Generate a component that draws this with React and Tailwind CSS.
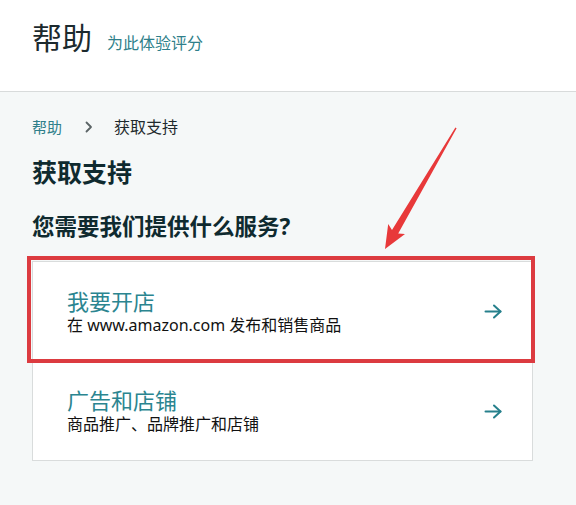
import React from "react";

function ArrowRight() {
  return (
    <svg width="18" height="17" viewBox="0 0 18 17" fill="none" stroke="#26808c" strokeWidth="2" strokeLinecap="round" strokeLinejoin="round">
      <path d="M1.5 8.5h15" />
      <path d="M10 2.5l6.5 6-6.5 6" />
    </svg>
  );
}

function Card({ title, sub, first }) {
  return (
    <div className={`h-[99px] flex items-center justify-between pl-[34px] pr-[30px] bg-white ${first ? "" : "border-t border-[#d9dcdc]"}`}>
      <div className="flex flex-col">
        <div className="text-[22px] leading-[26px] text-[#2b8590]">{title}</div>
        <div className="text-[16px] leading-[22px] text-[#111111]">{sub}</div>
      </div>
      <ArrowRight />
    </div>
  );
}

export default function App() {
  return (
    <div
      className="relative min-h-screen bg-[#f5f8f8] overflow-hidden"
      style={{ fontFamily: '"Noto Sans", "Noto Sans CJK SC", sans-serif' }}
    >
      <header className="h-[92px] bg-white border-b border-[#d8dbdb] px-8 pt-[19px]">
        <div className="flex items-baseline gap-[15px]">
          <span className="text-[30px] leading-[38px] text-[#1c2a2e]">帮助</span>
          <span className="text-[16px] leading-[22px] text-[#2f7f8a]">为此体验评分</span>
        </div>
      </header>

      <main className="px-8 pt-[25px]">
        <nav className="flex items-center h-[20px] text-[15px] leading-[20px]">
          <span className="text-[#2f7f8a]">帮助</span>
          <svg className="ml-[23px] mr-[21px]" width="8" height="12" viewBox="0 0 8 12" fill="none" stroke="#5b6466" strokeWidth="1.8" strokeLinecap="round" strokeLinejoin="round">
            <path d="M1.5 1.5l4.5 4.5-4.5 4.5" />
          </svg>
          <span className="text-[16px] text-[#1f2a2d]">获取支持</span>
        </nav>

        <h1 className="mt-[19px] text-[25px] leading-[32px] font-bold text-[#0f2a2f]">获取支持</h1>
        <h2 className="mt-[24px] text-[22.5px] leading-[30px] font-bold text-[#0f2a2f]">您需要我们提供什么服务?</h2>

        <div className="mt-[19px] w-[501px] border border-[#d9dcdc] bg-white">
          <Card first title="我要开店" sub="在 www.amazon.com 发布和销售商品" />
          <Card title="广告和店铺" sub="商品推广、品牌推广和店铺" />
        </div>
      </main>

      <div className="absolute left-[27px] top-[256px] w-[508px] h-[107px] border-4 border-[#dc3b40] pointer-events-none" />

      <svg className="absolute left-0 top-0 pointer-events-none" width="576" height="505">
        <polygon
          fill="#e8393a"
          points="456.6,128.3 398.2,233.5 405,234 385,249 388.2,224 392,229.9 455.4,127.5"
        />
      </svg>
    </div>
  );
}
